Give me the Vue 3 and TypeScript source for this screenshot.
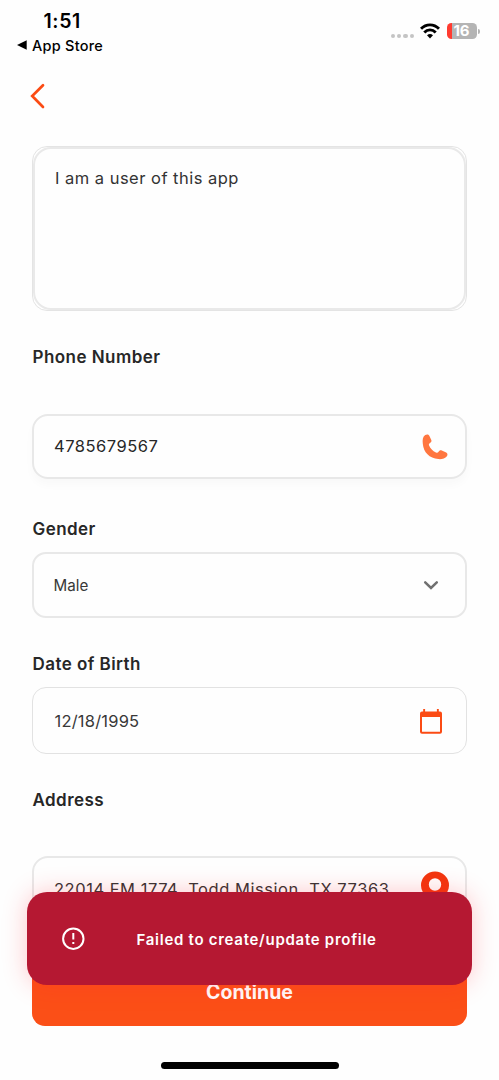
<script setup lang="ts">
import { ref } from 'vue'

const bio = ref('I am a user of this app')
const phone = ref('4785679567')
const gender = ref('Male')
const birthDate = ref('12/18/1995')
const address = ref('22014 FM 1774, Todd Mission, TX 77363')
const errorMessage = ref('Failed to create/update profile')
const signalDots = 4
</script>

<template>
  <div class="screen">
    <header class="status">
      <div class="status-left">
        <span class="clock">1:51</span>
        <span class="return">
          <svg width="10" height="10" viewBox="0 0 10 10"><path d="M0 5 9.7 0.2V9.8Z" fill="#000" /></svg>
          <span class="return-label">App Store</span>
        </span>
      </div>
      <div class="status-right">
        <span class="dots"><i v-for="n in signalDots" :key="n"></i></span>
        <svg class="wifi" width="20" height="16" viewBox="0 0 20 16" fill="none" stroke="#000" stroke-width="2.9">
          <path d="M1 5.8C6 0.5 14 0.5 19 5.8" />
          <path d="M4.3 9.4C7.5 6 12.5 6 15.7 9.4" />
          <path d="M10 15.4 7 12.2Q10 9.6 13 12.2Z" fill="#000" stroke="none" />
        </svg>
        <span class="battery"><span class="level">16</span></span>
        <span class="battery-tip"></span>
      </div>
    </header>

    <nav class="nav">
      <svg width="16" height="26" viewBox="0 0 16 26" fill="none" stroke="#fb4b14" stroke-width="2.7" stroke-linecap="round" stroke-linejoin="miter">
        <path d="M13 2.2 2.2 13 13 24" />
      </svg>
    </nav>

    <main class="form">
      <div class="bio"><div class="bio-inner">{{ bio }}</div></div>

      <label class="label phone-label">Phone Number</label>
      <div class="field phone">
        <span class="phone-value">{{ phone }}</span>
        <svg class="phone-icon" width="26" height="26" viewBox="0 0 26 26">
          <path d="M3.2 1C4.8 0.2 6.6 0.3 7.3 1.7L9.3 6.1C9.9 7.5 9.1 8.4 7.7 9.2C6.8 9.8 6.7 10.5 7.1 11.6C8.4 14.7 10.7 17 13.9 18.5C15 19 15.8 18.9 16.4 18C17.3 16.3 18.4 15.8 19.8 16.4L24.2 18.4C25.7 19.1 25.8 20.9 24.9 22.3C23.1 24.8 19.8 25.3 16.4 25.1C7.4 24.4 1.5 18.3 0.8 9.8C0.4 5.9 0.7 2.7 3.2 1Z" fill="#ff763f" />
        </svg>
      </div>

      <label class="label gender-label">Gender</label>
      <div class="field gender">
        <span class="gender-value">{{ gender }}</span>
        <svg class="chevron" width="16" height="10" viewBox="0 0 16 10" fill="none" stroke="#707070" stroke-width="2.5" stroke-linecap="round">
          <path d="M2.2 2.3 8 8 13.8 2.3" />
        </svg>
      </div>

      <label class="label date-label">Date of Birth</label>
      <div class="field date">
        <span class="date-value">{{ birthDate }}</span>
        <svg class="calendar" width="22" height="25" viewBox="0 0 22 25">
          <path fill-rule="evenodd" fill="#fb4b14" d="M3.2 0H5.1V2.6H16.9V0H18.8V2.6H20Q22 2.6 22 4.6V22.7Q22 24.7 20 24.7H2Q0 24.7 0 22.7V4.6Q0 2.6 2 2.6H3.2ZM2 8.1V22.7H20V8.1Z" />
        </svg>
      </div>

      <label class="label address-label">Address</label>
      <div class="field address">
        <span class="address-value">{{ address }}</span>
        <svg class="pin" width="30" height="36" viewBox="0 0 30 36">
          <path fill-rule="evenodd" fill="#f2360e" d="M15 0.5A14 14 0 0 1 29 14.5C29 24 19 29 15 35C11 29 1 24 1 14.5A14 14 0 0 1 15 0.5ZM15 7.3A6.2 6.2 0 1 0 15 19.7A6.2 6.2 0 1 0 15 7.3Z" />
        </svg>
      </div>

      <button class="continue" type="button">Continue</button>
    </main>

    <div class="home-bar"></div>

    <div class="toast" role="alert">
      <svg width="24" height="24" viewBox="0 0 24 24" fill="none" stroke="#fff" stroke-width="2">
        <circle cx="12.3" cy="11.7" r="10.2" />
        <path d="M12.3 6V12.6M12.3 15V17.1" />
      </svg>
      <span class="toast-text">{{ errorMessage }}</span>
    </div>
  </div>
</template>

<style>
body {
  background: #fefefe;
}
</style>

<style scoped>
.screen {
  position: relative;
  box-sizing: border-box;
  width: 499px;
  height: 1080px;
  overflow: hidden;
  display: flex;
  flex-direction: column;
  background: #fefefe;
  color: #272727;
  font-family: Inter, "Liberation Sans", sans-serif;
  white-space: nowrap;
}
.status {
  display: flex;
  justify-content: space-between;
  height: 64px;
  color: #000;
}
.status-left {
  display: flex;
  flex-direction: column;
  padding: 9px 0 0 17px;
}
.clock {
  margin-left: 26.5px;
  font-size: 19.5px;
  line-height: 24px;
  font-weight: 600;
  letter-spacing: 0.6px;
}
.return {
  display: flex;
  align-items: center;
  gap: 5px;
  height: 24px;
}
.return-label {
  font-size: 14.5px;
  font-weight: 500;
  letter-spacing: 0.25px;
}
.status-right {
  display: flex;
  align-items: center;
  height: 62px;
  padding-right: 19px;
}
.dots {
  display: flex;
  gap: 2px;
  margin: 10px 6px 0 0;
}
.dots i {
  width: 4.3px;
  height: 4.3px;
  border-radius: 50%;
  background: #c4c4c4;
}
.wifi {
  margin-right: 7px;
}
.battery {
  display: flex;
  justify-content: center;
  align-items: center;
  width: 30px;
  height: 16px;
  border-radius: 4.5px;
  background: linear-gradient(90deg, #ff3b30 5px, #b4b4b4 5px);
}
.level {
  color: #fff;
  font-size: 15px;
  line-height: 16px;
  font-weight: 700;
  margin-right: 1px;
}
.battery-tip {
  width: 2px;
  height: 5px;
  margin-left: 1px;
  border-radius: 0 2px 2px 0;
  background: #b4b4b4;
}
.nav {
  display: flex;
  align-items: center;
  height: 64px;
  padding-left: 30px;
}
.form {
  display: flex;
  flex-direction: column;
  padding: 17.5px 32.5px 0 32px;
}
.bio {
  box-sizing: border-box;
  height: 165.5px;
  border: 1px solid #e4e4e4;
  border-radius: 15px;
}
.bio-inner {
  box-sizing: border-box;
  height: 100%;
  padding: 17px 20px;
  border: 2px solid #e9e9e9;
  border-radius: 18px;
  font-size: 16.5px;
  line-height: 24px;
  letter-spacing: 0.48px;
  color: #333;
}
.label {
  padding-left: 0.5px;
  font-size: 17px;
  line-height: 24px;
  font-weight: 600;
  letter-spacing: 0.45px;
}
.phone-label {
  margin: 34px 0 45px;
}
.gender-label {
  margin: 38px 0 11px;
}
.date-label {
  margin: 34px 0 11px;
}
.address-label {
  margin: 34px 0 44px;
}
.field {
  box-sizing: border-box;
  display: flex;
  align-items: center;
  justify-content: space-between;
  height: 66px;
  padding: 0 18px 0 20px;
  border: 2px solid #e8e8e8;
  border-radius: 16px;
}
.phone {
  height: 65px;
  box-shadow: 0 6px 10px rgba(0, 0, 0, 0.025);
}
.phone-value {
  margin-top: -1px;
  font-size: 16.5px;
  letter-spacing: 0.5px;
}
.phone-icon {
  margin-right: -1px;
}
.gender {
  border-radius: 14px;
  padding: 0 25.5px 0 19.5px;
}
.gender-value {
  font-size: 15.2px;
  color: #383838;
}
.date {
  height: 67px;
  padding: 0 23.5px 0 21.5px;
  border: 1px solid #e2e2e2;
  border-radius: 14px;
}
.calendar {
  margin-top: 1px;
}
.date-value {
  font-size: 16.5px;
  letter-spacing: 0.2px;
  color: #383838;
}
.address {
  padding-right: 15px;
}
.address-value {
  font-size: 16.5px;
  letter-spacing: 0.54px;
  color: #333;
}
.continue {
  height: 70px;
  margin-top: 34px;
  padding: 2px 0 0 0.5px;
  border: 0;
  border-radius: 13px;
  background: #fb4f17;
  color: #fff;
  font-family: inherit;
  font-size: 19.5px;
  font-weight: 700;
}
.home-bar {
  width: 178px;
  height: 7px;
  margin: 36px 0 0 161px;
  border-radius: 4px;
  background: #000;
}
.toast {
  position: absolute;
  left: 27px;
  top: 892px;
  box-sizing: border-box;
  display: flex;
  align-items: center;
  width: 445px;
  height: 93px;
  padding-left: 34px;
  border-radius: 20px;
  background: #b51832;
  box-shadow: 0 0 24px rgba(255, 40, 50, 0.26);
}
.toast-text {
  margin: 2px 0 0 51.5px;
  color: #fff;
  font-size: 15px;
  font-weight: 600;
  letter-spacing: 0.72px;
}
</style>
